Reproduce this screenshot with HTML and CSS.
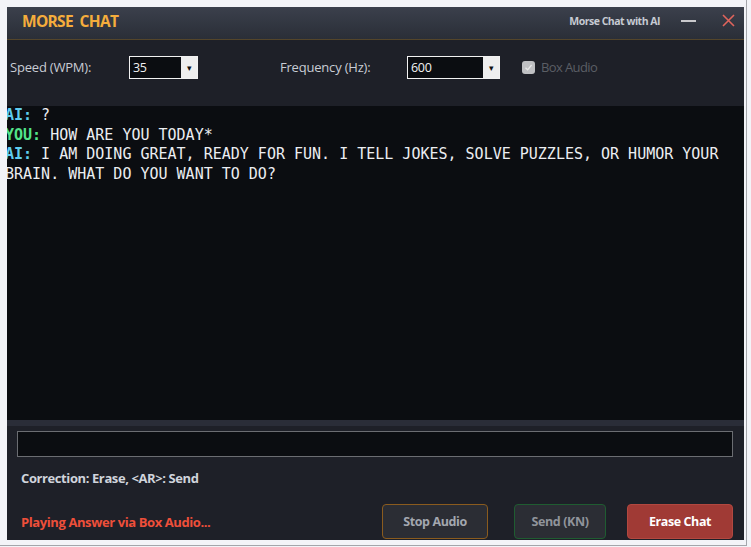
FILE: index.html
```html
<!DOCTYPE html>
<html lang="en">
<head>
    <meta charset="UTF-8">
    <meta name="viewport" content="width=device-width, initial-scale=1.0">
    <title>Morse Chat</title>
    <link rel="stylesheet" href="styles.css">
</head>
<body>
    <div class="frame">
        <div class="window">
            <header class="titlebar">
                <span class="brand">MORSE&nbsp; CHAT</span>
                <span class="win-title">Morse Chat with AI</span>
                <span class="win-min"></span>
                <span class="win-close">
                    <svg width="13" height="13" viewBox="0 0 13 13"><path d="M1 1 L12 12 M12 1 L1 12" stroke="#e0645c" stroke-width="1.6" fill="none"/></svg>
                </span>
            </header>

            <div class="settings">
                <label class="field-label">Speed (WPM):</label>
                <div class="combo combo-speed">
                    <span class="combo-value">35</span>
                    <span class="combo-arrow">&#9662;</span>
                </div>
                <label class="field-label">Frequency (Hz):</label>
                <div class="combo combo-freq">
                    <span class="combo-value">600</span>
                    <span class="combo-arrow">&#9662;</span>
                </div>
                <label class="check">
                    <span class="check-box">
                        <svg width="9" height="9" viewBox="0 0 9 9"><path d="M1.5 4.8 L3.6 6.8 L7.6 2" stroke="#e8e8e8" stroke-width="1.3" fill="none"/></svg>
                    </span>
                    Box Audio
                </label>
            </div>

            <div class="chat">
                <div class="chat-text">
                    <div><span class="who-ai">AI:</span> ?</div>
                    <div><span class="who-you">YOU:</span> HOW ARE YOU TODAY*</div>
                    <div><span class="who-ai">AI:</span> I AM DOING GREAT, READY FOR FUN. I TELL JOKES, SOLVE PUZZLES, OR HUMOR YOUR BRAIN. WHAT DO YOU WANT TO DO?</div>
                </div>
            </div>
            <div class="divider"></div>

            <div class="bottom">
                <input type="text" class="morse-input">
                <p class="hint">Correction: Erase, &lt;AR&gt;: Send</p>
                <div class="actions">
                    <span class="status">Playing Answer via Box Audio...</span>
                    <button class="btn btn-stop">Stop Audio</button>
                    <button class="btn btn-send">Send (KN)</button>
                    <button class="btn btn-erase">Erase Chat</button>
                </div>
            </div>
        </div>
    </div>
</body>
</html>
```

FILE: styles.css
```css
body {
    margin: 0;
    background: #f3f4f8;
    font-family: 'Open Sans', 'Noto Sans', sans-serif;
}

.frame {
    width: 747px;
    height: 546px;
    box-sizing: border-box;
    padding: 7px 0 0 7px;
    border-right: 1px solid #a4a6ab;
    border-bottom: 1px solid #a4a6ab;
}

.window {
    width: 737px;
    height: 533px;
    background: #1e2028;
    display: flex;
    flex-direction: column;
    overflow: hidden;
}

.titlebar {
    height: 33px;
    flex: none;
    box-sizing: border-box;
    padding-bottom: 5px;
    display: flex;
    align-items: center;
    background: linear-gradient(to bottom, #3b404c, #2a2e37);
    border-bottom: 1px solid #54452a;
}
.brand {
    margin-left: 15px;
    color: #f5ad3c;
    font-weight: 700;
    font-size: 15.5px;
    letter-spacing: -0.7px;
}
.win-title {
    margin-left: auto;
    color: #c6cad2;
    font-size: 10.5px;
    font-weight: 700;
    letter-spacing: -0.5px;
}
.win-min {
    width: 15px;
    height: 2px;
    background: #c9c9cc;
    margin: 1px 0 0 21px;
}
.win-close {
    display: flex;
    margin: 0 9px 0 26px;
}

.settings {
    height: 66px;
    flex: none;
    box-sizing: border-box;
    padding: 16px 0 0 3px;
    display: grid;
    grid-template-columns: 119px 151px 127px 115px auto;
    align-items: start;
}
.field-label {
    color: #c8ccd4;
    font-size: 13px;
    line-height: 23px;
    letter-spacing: -0.2px;
}
.combo {
    height: 23px;
    box-sizing: border-box;
    border: 1px solid #f2f2f2;
    background: #0b0d11;
    display: flex;
}
.combo-speed { width: 69px; }
.combo-freq { width: 93px; }
.combo-value {
    flex: 1;
    color: #f2f2f2;
    font-size: 12.5px;
    line-height: 21px;
    padding-left: 3px;
    letter-spacing: -0.3px;
}
.combo-arrow {
    width: 16px;
    background: #eeeeee;
    color: #111;
    font-size: 9px;
    line-height: 21px;
    text-align: center;
}
.check {
    display: flex;
    align-items: center;
    gap: 6px;
    height: 22px;
    color: #5b5e65;
    font-size: 13px;
    letter-spacing: -0.6px;
}
.check-box {
    width: 13px;
    height: 13px;
    border-radius: 3px;
    background: #bfc0c3;
    display: flex;
    align-items: center;
    justify-content: center;
}

.chat {
    height: 314px;
    flex: none;
    background: #0b0d11;
    overflow: hidden;
}
.chat-text {
    margin-left: -2px;
    width: 740px;
    font-family: 'DejaVu Sans Mono', monospace;
    font-size: 15px;
    line-height: 19.5px;
    color: #eceef2;
}
.who-ai {
    color: #5fcdf0;
    font-weight: 700;
}
.who-you {
    color: #52e58a;
    font-weight: 700;
}

.divider {
    height: 6px;
    flex: none;
    background: #2a2d38;
}

.bottom {
    flex: 1;
    padding: 5px 11px 0 10px;
    display: flex;
    flex-direction: column;
}
.morse-input {
    height: 26px;
    box-sizing: border-box;
    border: 1px solid #6b6d72;
    background: #0b0d11;
    margin: 0;
    outline: none;
}
.hint {
    margin: 12px 0 0 4px;
    color: #d0d4dc;
    font-size: 13px;
    font-weight: 700;
    letter-spacing: -0.4px;
}
.actions {
    margin-top: 17px;
    display: flex;
    align-items: center;
}
.status {
    margin: 0 auto 0 4px;
    color: #ee4f3a;
    font-size: 13px;
    font-weight: 700;
    letter-spacing: -0.4px;
}
.btn {
    height: 35px;
    box-sizing: border-box;
    border-radius: 4px;
    background: #2b2d34;
    font-family: 'Open Sans', 'Noto Sans', sans-serif;
    font-size: 12.5px;
    font-weight: 700;
    letter-spacing: -0.4px;
    cursor: pointer;
}
.btn-stop {
    width: 106px;
    border: 1px solid #8a5b1e;
    color: #a3a7af;
}
.btn-send {
    width: 92px;
    margin-left: 26px;
    border: 1px solid #1f5c31;
    color: #90949b;
}
.btn-erase {
    width: 106px;
    margin-left: 21px;
    border: 1px solid #b24840;
    background: #a03a35;
    color: #ffffff;
}
```
